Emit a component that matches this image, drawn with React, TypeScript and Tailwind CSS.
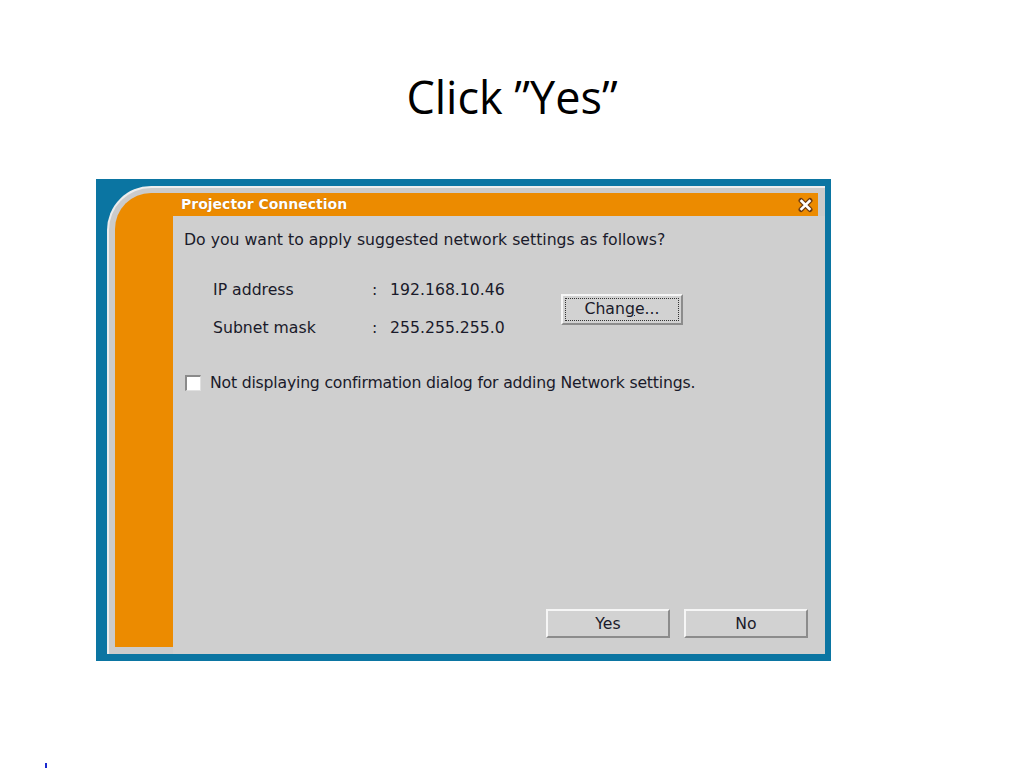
import React from "react";

const body = { fontFamily: '"DejaVu Sans", Verdana, sans-serif' } as React.CSSProperties;

function WinButton({ children, className = "" }: { children: React.ReactNode; className?: string }) {
  return (
    <div
      className={`flex items-center justify-center bg-[#d2d2d2] border-t-2 border-l-2 border-r-2 border-b-2 border-t-[#f6f6f6] border-l-[#f6f6f6] border-r-[#8c8c8c] border-b-[#8c8c8c] text-[15.7px] text-[#1a1a2a] ${className}`}
      style={body}
    >
      {children}
    </div>
  );
}

export default function App() {
  return (
    <div className="relative w-[1024px] h-[768px] bg-white flex flex-col overflow-hidden">
      <div
        className="mt-[70px] h-[54px] text-center text-[45px] leading-[54px] text-black"
        style={{ fontFamily: '"Open Sans", Lato, sans-serif' }}
      >
        Click ”Yes”
      </div>

      <div className="ml-[96px] mt-[55px] w-[735px] h-[482px] bg-[#0b75a2] pl-[11px] pt-[7px] pr-[6px] pb-[7px]">
        <div className="h-full bg-[#cbcbcb] rounded-tl-[44px] border-t-2 border-l-2 border-[#ededed] flex pl-[6px] pt-[5px] pb-[7px]">
          <div className="w-[58px] bg-[#ec8b00] rounded-tl-[36px]" />
          <div className="flex-1 flex flex-col -mb-[7px]">
            <div className="h-[23px] mr-[7px] bg-[#ec8b00] flex items-center justify-between pl-[8px] pr-[4px]">
              <span
                className="text-white font-bold text-[14px]"
                style={{ ...body, textShadow: "0 0 1px #a05a00" }}
              >
                Projector Connection
              </span>
              <svg width="17" height="16" viewBox="0 0 17 16">
                <path d="M4 3.5 L13 12.5 M13 3.5 L4 12.5" stroke="#6b3a10" strokeWidth="5" strokeLinecap="round" />
                <path d="M4.5 4 L12.5 12 M12.5 4 L4.5 12" stroke="#ffffff" strokeWidth="2.6" strokeLinecap="square" />
              </svg>
            </div>
            <div className="flex-1 flex flex-col bg-[#cfcfcf] pl-[11px] text-[15.7px] text-[#1a1a2a]" style={body}>
              <div className="mt-[14px] h-[20px] leading-[20px]">Do you want to apply suggested network settings as follows?</div>
              <div className="mt-[30px] flex items-center">
                <div className="ml-[29px] flex flex-col gap-[18px]">
                  <div className="flex h-[20px] leading-[20px]">
                    <span className="w-[159px]">IP address</span>
                    <span className="w-[18px]">:</span>
                    <span className="w-[171px]">192.168.10.46</span>
                  </div>
                  <div className="flex h-[20px] leading-[20px]">
                    <span className="w-[159px]">Subnet mask</span>
                    <span className="w-[18px]">:</span>
                    <span className="w-[171px]">255.255.255.0</span>
                  </div>
                </div>
                <WinButton className="w-[122px] h-[31px] p-[2px]">
                  <div className="w-full h-full flex items-center justify-center border border-dotted border-[#333]">
                    <span>
                      Chan<span className="underline">g</span>e...
                    </span>
                  </div>
                </WinButton>
              </div>
              <div className="mt-[35px] flex items-center h-[20px]">
                <div className="w-[16px] h-[16px] bg-white border-t-2 border-l-2 border-t-[#8a8a8a] border-l-[#8a8a8a] border-r border-b border-r-[#e0e0e0] border-b-[#e0e0e0] ml-[1px]" />
                <span className="ml-[9px] leading-[20px] tracking-[-0.2px]">Not displaying confirmation dialog for adding Network settings.</span>
              </div>
              <div className="flex-1" />
              <div className="flex justify-end gap-[14px] pr-[17px] pb-[16px]">
                <WinButton className="w-[124px] h-[29px]">Yes</WinButton>
                <WinButton className="w-[124px] h-[29px]">No</WinButton>
              </div>
            </div>
          </div>
        </div>
      </div>

      <div className="absolute left-[45px] top-[763px] w-[2px] h-[5px] bg-[#1a2ad0]" />
    </div>
  );
}
